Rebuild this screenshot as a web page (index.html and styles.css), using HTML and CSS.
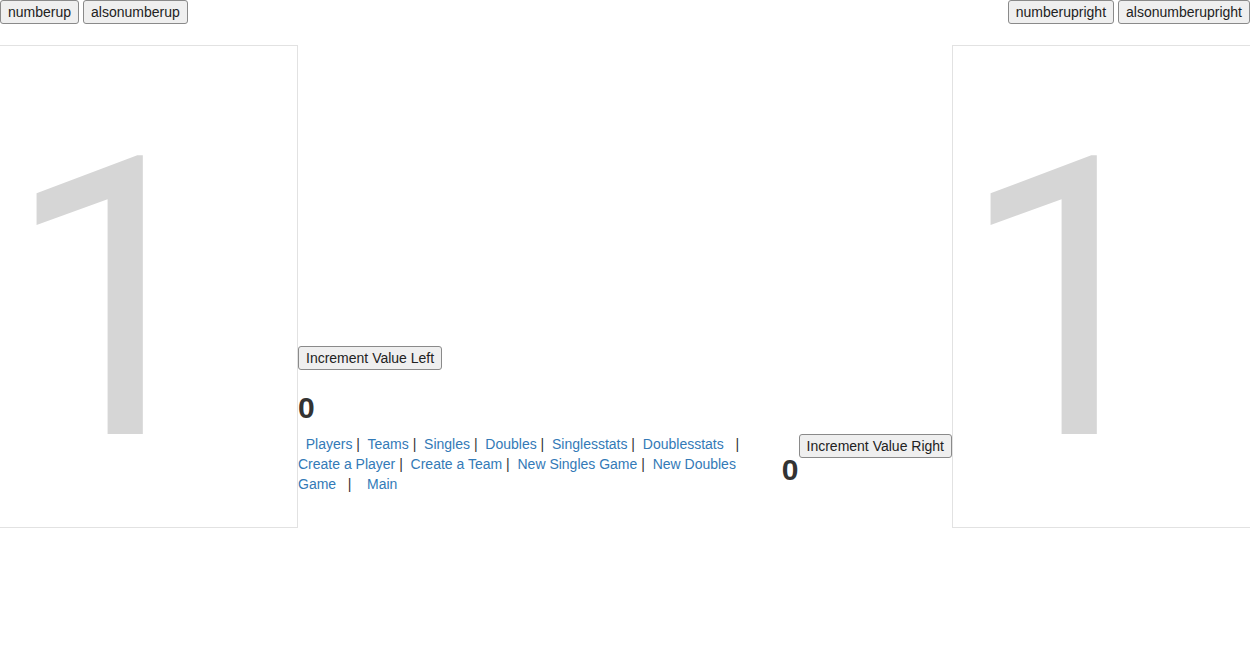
FILE: index.html
```html
<!DOCTYPE html>
<html>
<head>
<meta charset="utf-8">
<link rel="stylesheet" href="styles.css">
</head>
<body>
<div class="topbar">
  <div class="btn-group">
    <button class="btn">numberup</button>
    <button class="btn">alsonumberup</button>
  </div>
  <div class="btn-group">
    <button class="btn">numberupright</button>
    <button class="btn">alsonumberupright</button>
  </div>
</div>
<div class="board">
  <div class="panel"><div class="big">1</div></div>
  <div class="middle">
    <div class="left-block">
      <button class="btn block">Increment Value Left</button>
      <h2 class="score">0</h2>
      <div class="nav">&nbsp; <a href="#">Players</a> |&nbsp; <a href="#">Teams</a> |&nbsp; <a href="#">Singles</a> |&nbsp; <a href="#">Doubles</a> |&nbsp; <a href="#">Singlesstats</a> |&nbsp; <a href="#">Doublesstats</a> &nbsp; | <a href="#">Create a Player</a> |&nbsp; <a href="#">Create a Team</a> |&nbsp; <a href="#">New Singles Game</a> |&nbsp; <a href="#">New Doubles Game</a> &nbsp; | &nbsp; &nbsp;<a href="#">Main</a></div>
    </div>
    <div class="right-block">
      <h2 class="score score-right">0</h2>
      <button class="btn">Increment Value Right</button>
    </div>
  </div>
  <div class="panel"><div class="big">1</div></div>
</div>
</body>
</html>
```
FILE: styles.css
```css
html, body {
  overflow: hidden;
}
body {
  margin: 0;
  font-family: "Liberation Sans", Arial, Helvetica, sans-serif;
  font-size: 14px;
  line-height: 20px;
  color: #333;
  background: #fff;
}
.topbar {
  display: flex;
  justify-content: space-between;
  height: 24px;
}
.btn-group {
  display: flex;
  gap: 4px;
}
.btn {
  font-family: "Liberation Sans", Arial, Helvetica, sans-serif;
  font-size: 14px;
  line-height: 20px;
  color: #222;
  background: #efefef;
  border: 1px solid #8a8a8a;
  border-radius: 3px;
  padding: 1px 7px;
  margin: 0;
  height: 24px;
  box-sizing: border-box;
  white-space: nowrap;
}
.btn.block {
  display: block;
}
.board {
  display: flex;
  margin: 21px -2px 0;
}
.panel {
  flex: 0 0 300px;
  height: 483px;
  box-sizing: border-box;
  border: 1px solid #e2e2e2;
  padding-top: 60px;
  overflow: hidden;
}
.big {
  font-family: Roboto, "Liberation Sans", sans-serif;
  font-size: 390px;
  line-height: 1;
  color: #d6d6d6;
  text-indent: 5px;
}
.middle {
  flex: 1;
  display: flex;
  justify-content: space-between;
  align-items: flex-end;
  padding-bottom: 34px;
}
.left-block {
  width: 445px;
}
.score {
  font-size: 30px;
  line-height: 33px;
  font-weight: bold;
  margin: 21px 0 10px;
  color: #333;
}
.right-block {
  display: flex;
  align-items: flex-start;
}
.score-right {
  margin: 19px 0 8px;
}
.nav a {
  color: #337ab7;
  text-decoration: none;
}
```
